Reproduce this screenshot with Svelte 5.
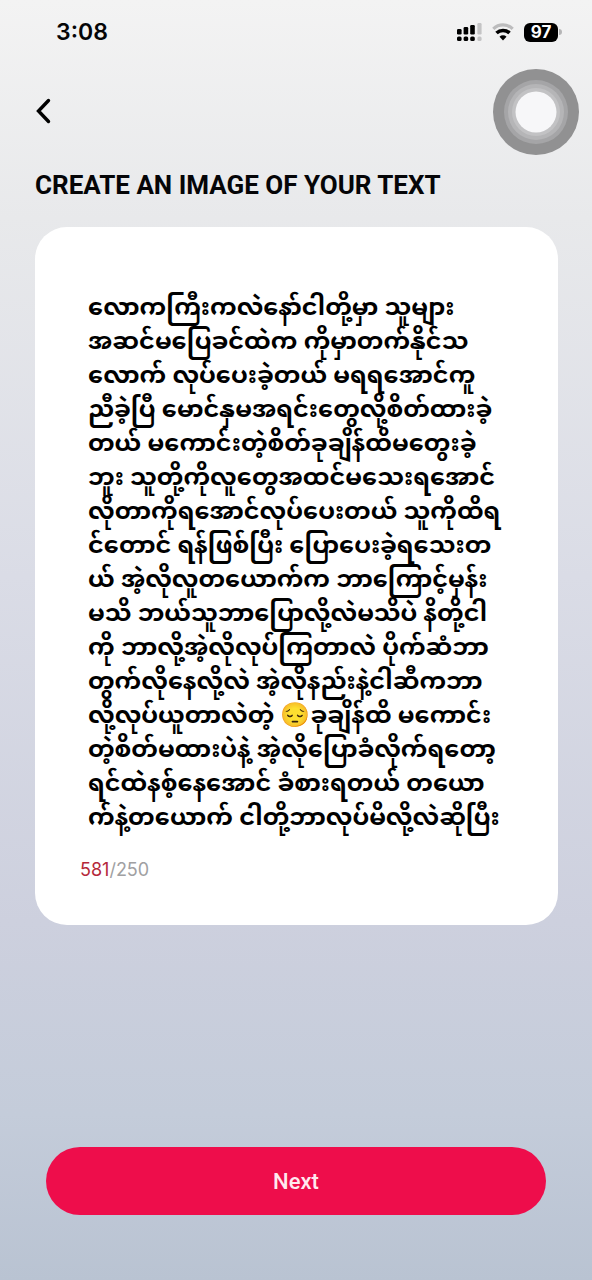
<script>
	const LIMIT = 250;

	let { count = 581, onback = () => {}, onnext = () => {} } = $props();

	// ─── Draft text, one entry per visual line ──────
	const lines = [
		'လောကကြီးကလဲနော်ငါတို့မှာ သူများ',
		'အဆင်မပြေခင်ထဲက ကိုမှာတက်နိုင်သ',
		'လောက် လုပ်ပေးခဲ့တယ် မရရအောင်ကူ',
		'ညီခဲ့ပြီ မောင်နှမအရင်းတွေလို့စိတ်ထားခဲ့',
		'တယ် မကောင်းတဲ့စိတ်ခုချိန်ထိမတွေးခဲ့',
		'ဘူး သူတို့ကိုလူတွေအထင်မသေးရအောင်',
		'လိုတာကိုရအောင်လုပ်ပေးတယ် သူကိုထိရ',
		'င်တောင် ရန်ဖြစ်ပြီး ပြောပေးခဲ့ရသေးတ',
		'ယ် အဲ့လိုလူတယောက်က ဘာကြောင့်မှန်း',
		'မသိ ဘယ်သူဘာပြောလို့လဲမသိပဲ နိတို့ငါ',
		'ကို ဘာလို့အဲ့လိုလုပ်ကြတာလဲ ပိုက်ဆံဘာ',
		'တွက်လိုနေလို့လဲ အဲ့လိုနည်းနဲ့ငါဆီကဘာ',
		'လို့လုပ်ယူတာလဲတဲ့ 😔ခုချိန်ထိ မကောင်း',
		'တဲ့စိတ်မထားပဲနဲ့ အဲ့လိုပြောခံလိုက်ရတော့',
		'ရင်ထဲနစ့်နေအောင် ခံစားရတယ် တယော',
		'က်နဲ့တယောက် ငါတို့ဘာလုပ်မိလို့လဲဆိုပြီး'
	];

	let text = $state(lines.join('\n'));
</script>

<div class="screen">
	<header class="status-bar">
		<span class="time">3:08</span>
		<div class="indicators">
			<svg width="25" height="18" viewBox="0 0 25 18" aria-label="Signal">
				<g fill="#000">
					<rect x="0" y="6" width="4.600" height="5.400" rx="1.200" />
					<rect x="6.600" y="4" width="4.600" height="7.400" rx="1.200" />
					<rect x="13.200" y="2" width="4.600" height="9.400" rx="1.200" />
					<rect x="0" y="13.400" width="4.600" height="4.600" rx="1.600" />
					<rect x="6.600" y="13.400" width="4.600" height="4.600" rx="1.600" />
					<rect x="13.200" y="13.400" width="4.600" height="4.600" rx="1.600" />
				</g>
				<g fill="#c4c4c5">
					<rect x="20.400" y="0" width="4.200" height="11.400" rx="1.200" />
					<rect x="20.400" y="13.400" width="4.200" height="4.600" rx="1.600" />
				</g>
			</svg>
			<svg width="22" height="18" viewBox="0 0 22 18" aria-label="Wi-Fi">
				<path d="M1.300 5.800A14 14 0 0 1 20.700 5.800" fill="none" stroke="#bcbcbd" stroke-width="3.200" />
				<path d="M4.500 10A9.500 9.500 0 0 1 17.500 10" fill="none" stroke="#000" stroke-width="3.600" />
				<path d="M7.500 13.800A5 5 0 0 1 14.500 13.800L11 17.600Z" fill="#000" />
			</svg>
			<div class="battery">
				<span class="level">97</span>
				<span class="tip"></span>
			</div>
		</div>
	</header>

	<nav class="nav">
		<button class="back" type="button" aria-label="Back" onclick={onback}>
			<svg width="16" height="28" viewBox="0 0 16 28">
				<path d="M13.500 2.500L3.500 13L13.500 23.500" fill="none" stroke="#000" stroke-width="3.400" stroke-linecap="round" />
			</svg>
		</button>
		<button class="assist" type="button" aria-label="Assistive touch">
			<svg width="86" height="86" viewBox="0 0 86 86">
				<circle cx="43" cy="43" r="43" fill="#919192" />
				<circle cx="43" cy="43" r="32" fill="#a5a5a7" />
				<circle cx="43" cy="43" r="28" fill="#b5b5b7" />
				<circle cx="43" cy="43" r="24" fill="#c2c2c4" />
				<circle cx="43" cy="43" r="20.500" fill="#f7f7f9" />
			</svg>
		</button>
	</nav>

	<main class="content">
		<h1><label for="draft">CREATE AN IMAGE OF YOUR TEXT</label></h1>
		<section class="card">
			<textarea id="draft" bind:value={text} spellcheck="false"></textarea>
			<p class="counter"><span class:over={count > LIMIT}>{count}</span>/{LIMIT}</p>
		</section>
	</main>

	<footer class="actions">
		<button class="next" type="button" onclick={onnext}>Next</button>
	</footer>
</div>

<style>
	:global(body) {
		margin: 0;
	}
	.screen {
		display: flex;
		flex-direction: column;
		box-sizing: border-box;
		min-height: 100vh;
		font-family: Inter, 'Liberation Sans', sans-serif;
		color: #050507;
		background: linear-gradient(#f3f3f3 0%, #e8e9eb 17%, #dadce6 45%, #cdd0de 72%, #c4ccda 87%, #b9c3d2 100%);
	}
	button {
		padding: 0;
		border: 0;
		background: none;
		cursor: pointer;
	}
	svg {
		display: block;
	}

	/* ─── Status bar ─────────────────────────────── */
	.status-bar {
		display: flex;
		align-items: center;
		justify-content: space-between;
		height: 64px;
		padding: 0 30px 0 56px;
	}
	.time {
		font-size: 23px;
		font-weight: 600;
	}
	.indicators {
		display: flex;
		align-items: center;
		gap: 10px;
	}
	.battery {
		display: flex;
		align-items: center;
		gap: 1px;
	}
	.level {
		width: 34px;
		border-radius: 6px;
		background: #000;
		color: #fff;
		font-size: 17px;
		font-weight: 700;
		line-height: 19px;
		text-align: center;
	}
	.tip {
		width: 3px;
		height: 6px;
		border-radius: 0 3px 3px 0;
		background: #b5b5b6;
	}

	/* ─── Navigation ─────────────────────────────── */
	.nav {
		display: flex;
		align-items: center;
		justify-content: space-between;
		height: 96px;
		padding: 0 13px 0 35px;
	}

	/* ─── Text card ──────────────────────────────── */
	.content {
		padding: 9px 34px 0 35px;
	}
	h1 {
		margin: 0 0 26px;
		font-family: Roboto, sans-serif;
		font-size: 26px;
		font-weight: 700;
		line-height: 32px;
	}
	.card {
		padding: 60px 45px 41px;
		border-radius: 32px;
		background: #fff;
	}
	textarea {
		display: block;
		box-sizing: border-box;
		width: 100%;
		height: 549px;
		padding: 6px 0 0 8px;
		border: 0;
		outline: none;
		resize: none;
		overflow: hidden;
		background: none;
		color: #000;
		font-family: 'Noto Sans Myanmar', 'Noto Sans', 'Noto Color Emoji', sans-serif;
		font-size: 24px;
		font-weight: 700;
		line-height: 34px;
		white-space: pre;
	}
	.counter {
		margin: 20px 0 0;
		font-size: 18px;
		line-height: 28px;
		color: #a0a0a2;
	}
	.over {
		color: #b5283a;
	}

	/* ─── Bottom action ──────────────────────────── */
	.actions {
		margin-top: auto;
		padding: 24px 46px 65px;
	}
	.next {
		width: 100%;
		height: 68px;
		border-radius: 34px;
		background: #ee0d4b;
		color: #ffe9ef;
		font-family: Roboto, sans-serif;
		font-size: 22px;
		font-weight: 500;
	}
</style>
